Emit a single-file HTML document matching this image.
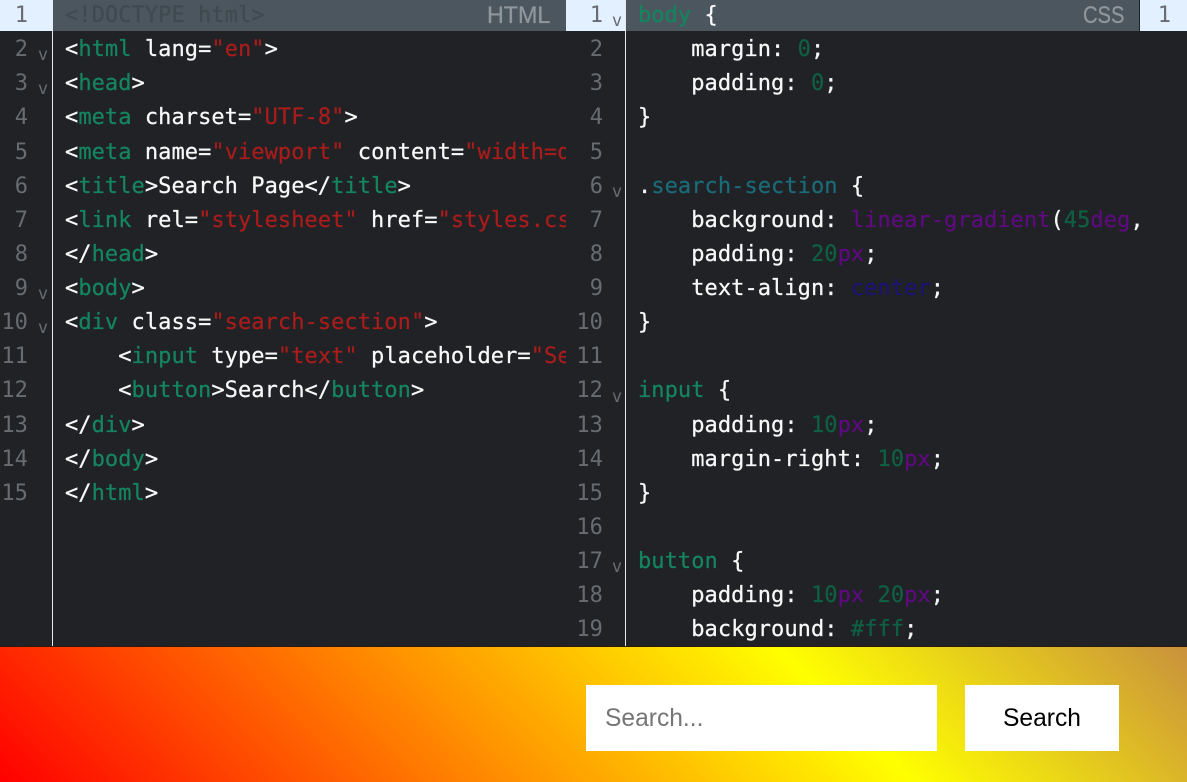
<!DOCTYPE html>
<html lang="en"><head><meta charset="UTF-8"><title>Editor</title>
<style>
html,body{margin:0;padding:0;width:1187px;height:782px;overflow:hidden;background:#202225}
.p{position:absolute;overflow:hidden}
pre{margin:0;position:absolute;font:22px/34.13px "DejaVu Sans Mono","Liberation Mono",monospace;letter-spacing:.06px;color:#f8f8f8;white-space:pre;-webkit-text-stroke:.25px currentColor}
.g{color:#686c70;text-align:right;-webkit-text-stroke:0}
.t{color:#14855f}.s{color:#a81c1c}.n{color:#0f6043}.u{color:#5f0a80}.c{color:#1a6a78}.k{color:#1c1272}.f{color:#5f0a80}.d{color:#3f4950}
.v{position:absolute;font:17px "DejaVu Sans Mono",monospace;color:#686c70;width:12px;text-align:center;line-height:12px}
.lbl{position:absolute;top:0;height:31px;font:24px/31px "Liberation Sans",sans-serif;color:#8f979c;transform-origin:0 50%;-webkit-text-stroke:.3px currentColor}
</style></head><body>
<div class="p" style="left:0;top:0;width:1187px;height:646px;background:#202225"></div>
<div class="p" style="left:52px;top:0;width:514px;height:31px;background:#4c565f"></div>
<div class="p" style="left:626px;top:0;width:513px;height:31px;background:#4c565f"></div>
<div class="p" style="left:0;top:0;width:53px;height:31px;background:#e2f0ff"></div>
<div class="p" style="left:566px;top:0;width:59px;height:31px;background:#e2f0ff"></div>
<div class="p" style="left:1140px;top:0;width:47px;height:31px;background:#e2f0ff"></div>
<div class="p" style="left:52px;top:31px;width:1px;height:615px;background:#e8e8e8"></div>
<div class="p" style="left:625px;top:0;width:1px;height:646px;background:#e8e8e8"></div>
<div class="lbl" style="left:487px;top:0;transform:scaleX(.97)">HTML</div>
<div class="lbl" style="left:1083px;top:0;transform:scaleX(.84)">CSS</div>
<pre class="g" style="left:0;top:-1px;width:28px">1
2
3
4
5
6
7
8
9
10
11
12
13
14
15</pre>
<pre class="g" style="left:566px;top:-1px;width:37px">1
2
3
4
5
6
7
8
9
10
11
12
13
14
15
16
17
18
19</pre>
<pre class="g" style="left:1140px;top:-1px;width:31px">1</pre>
<div class="v" style="left:37px;top:49px">v</div>
<div class="v" style="left:37px;top:83px">v</div>
<div class="v" style="left:37px;top:288px">v</div>
<div class="v" style="left:37px;top:322px">v</div>
<div class="v" style="left:611px;top:15px">v</div>
<div class="v" style="left:611px;top:186px">v</div>
<div class="v" style="left:611px;top:391px">v</div>
<div class="v" style="left:611px;top:561px">v</div>
<div class="p" style="left:53px;top:0;width:513px;height:646px">
<pre style="left:12px;top:-1px"><span class="d">&lt;!DOCTYPE html&gt;</span>
&lt;<span class="t">html</span> lang=<span class="s">"en"</span>&gt;
&lt;<span class="t">head</span>&gt;
&lt;<span class="t">meta</span> charset=<span class="s">"UTF-8"</span>&gt;
&lt;<span class="t">meta</span> name=<span class="s">"viewport"</span> content=<span class="s">"width=device-width, initial-scale=1.0"</span>&gt;
&lt;<span class="t">title</span>&gt;Search Page&lt;/<span class="t">title</span>&gt;
&lt;<span class="t">link</span> rel=<span class="s">"stylesheet"</span> href=<span class="s">"styles.css"</span>&gt;
&lt;/<span class="t">head</span>&gt;
&lt;<span class="t">body</span>&gt;
&lt;<span class="t">div</span> class=<span class="s">"search-section"</span>&gt;
    &lt;<span class="t">input</span> type=<span class="s">"text"</span> placeholder=<span class="s">"Search..."</span>&gt;
    &lt;<span class="t">button</span>&gt;Search&lt;/<span class="t">button</span>&gt;
&lt;/<span class="t">div</span>&gt;
&lt;/<span class="t">body</span>&gt;
&lt;/<span class="t">html</span>&gt;</pre>
</div>
<div class="p" style="left:626px;top:0;width:513px;height:646px">
<pre style="left:12px;top:-1px"><span class="t">body</span> {
    margin: <span class="n">0</span>;
    padding: <span class="n">0</span>;
}

.<span class="c">search-section</span> {
    background: <span class="f">linear-gradient</span>(<span class="n">45</span><span class="u">deg</span>, red, yellow, peru);
    padding: <span class="n">20</span><span class="u">px</span>;
    text-align: <span class="k">center</span>;
}

<span class="t">input</span> {
    padding: <span class="n">10</span><span class="u">px</span>;
    margin-right: <span class="n">10</span><span class="u">px</span>;
}

<span class="t">button</span> {
    padding: <span class="n">10</span><span class="u">px</span> <span class="n">20</span><span class="u">px</span>;
    background: <span class="n">#fff</span>;</pre>
</div>
<div class="p" style="left:0;top:646px;width:1187px;height:1px;background:#2a1a12"></div>
<div class="p" style="left:0;top:647px;width:1187px;height:135px;background:linear-gradient(45deg,#f00 0%,#ff0 69%,#c9913d 100%)"></div>
<div class="p" style="left:586px;top:685px;width:351px;height:66px;background:#fff;font:24.6px/67px 'Liberation Sans',sans-serif;color:#757575;text-indent:19px">Search...</div>
<div class="p" style="left:965px;top:685px;width:154px;height:66px;background:#fff;font:24.6px/67px 'Liberation Sans',sans-serif;color:#000;text-align:center">Search</div>
</body></html>
